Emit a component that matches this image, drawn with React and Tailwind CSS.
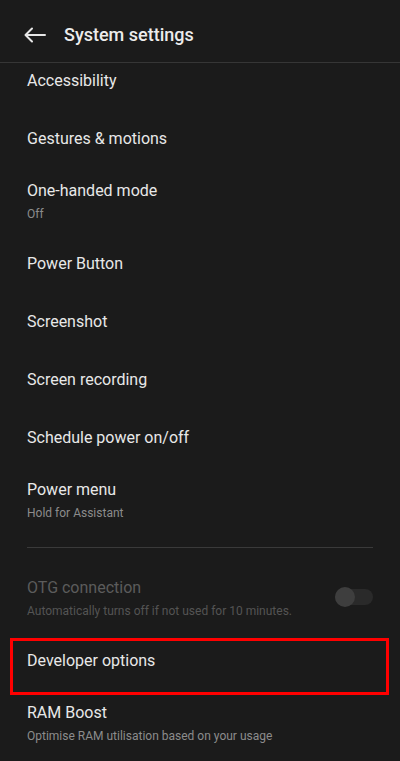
import React from "react";

function Row({ title, sub, h = "h-[58px]", disabled }) {
  return (
    <div className={`${h} flex flex-col justify-center px-[27px]`}>
      <div className={`text-[16px] leading-[20px] ${disabled ? "text-[#5c5c5c]" : "text-[#e8e8e8]"}`}>{title}</div>
      {sub && (
        <div className={`text-[12px] leading-[16px] mt-[5px] ${disabled ? "text-[#545454]" : "text-[#8c8c8c]"}`}>{sub}</div>
      )}
    </div>
  );
}

export default function App() {
  return (
    <div className="relative w-[400px] h-[761px] overflow-hidden bg-[#1b1b1b]" style={{ fontFamily: "Roboto, 'Noto Sans', sans-serif" }}>
      <div className="h-[63px] flex items-start pt-[22px] border-b border-[#363636]">
        <svg width="22" height="16" viewBox="0 0 22 16" className="ml-[24px] mt-[5px]" fill="none" stroke="#e6e6e6" strokeWidth="2" strokeLinecap="round" strokeLinejoin="round">
          <path d="M21 8H2M8 1.5L1.5 8L8 14.5" />
        </svg>
        <div className="ml-[18px] text-[18px] leading-[26px] text-[#ececec] font-medium">System settings</div>
      </div>
      <div className="h-[47px] pt-[8px] px-[27px] text-[16px] leading-[20px] text-[#e8e8e8]">Accessibility</div>
      <Row title="Gestures & motions" />
      <Row title="One-handed mode" sub="Off" h="h-[67px]" />
      <Row title="Power Button" />
      <Row title="Screenshot" />
      <Row title="Screen recording" />
      <Row title="Schedule power on/off" />
      <Row title="Power menu" sub="Hold for Assistant" h="h-[67px]" />
      <div className="mx-[27px] mt-[13px] mb-[17px] h-px bg-[#3a3a3a]" />
      <div className="h-[67px] flex items-center justify-between pr-[27px]">
        <Row title="OTG connection" sub="Automatically turns off if not used for 10 minutes." h="h-[67px]" disabled />
        <div className="relative w-[38px] h-[16px] rounded-full bg-[#2a2a2a] -mt-[4px]">
          <div className="absolute left-0 top-1/2 -translate-y-1/2 w-[20px] h-[20px] rounded-full bg-[#3e3e3e]" />
        </div>
      </div>
      <Row title="Developer options" />
      <Row title="RAM Boost" sub="Optimise RAM utilisation based on your usage" h="h-[67px]" />
      <div className="absolute left-[10px] top-[638px] w-[379px] h-[57px] border-[3px] border-[#ff0000]" />
    </div>
  );
}
